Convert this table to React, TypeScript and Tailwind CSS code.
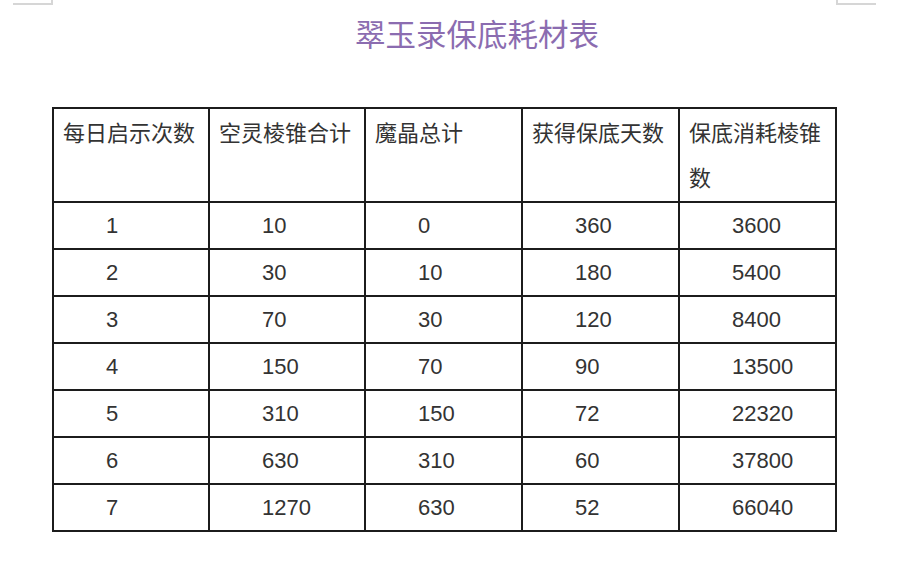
const headers = ["每日启示次数", "空灵棱锥合计", "魔晶总计", "获得保底天数", "保底消耗棱锥数"];

const rows = [
	["1", "10", "0", "360", "3600"],
	["2", "30", "10", "180", "5400"],
	["3", "70", "30", "120", "8400"],
	["4", "150", "70", "90", "13500"],
	["5", "310", "150", "72", "22320"],
	["6", "630", "310", "60", "37800"],
	["7", "1270", "630", "52", "66040"],
];

export default function App() {
	return (
		<div
			className="relative h-[578px] w-[898px] overflow-hidden bg-white"
			style={{ fontFamily: '"Liberation Sans", "Noto Sans CJK SC", sans-serif' }}
		>
			{/* page corner marks */}
			<div className="absolute left-[13px] top-0 h-[5px] w-[40px] border-b-2 border-r-2 border-[#d6d6d6]" />
			<div className="absolute left-[836px] top-0 h-[5px] w-[40px] border-b-2 border-l-2 border-[#d6d6d6]" />

			<h1 className="pl-[355px] pt-[15px] text-[30.5px] leading-[40px] font-normal text-[#8b6cb0]">
				翠玉录保底耗材表
			</h1>

			<table className="ml-[52px] mt-[52px] w-[785px] table-fixed border-separate border-spacing-0 border-l-2 border-t-2 border-[#1c1c1c] text-[#333]">
				<colgroup>
					<col className="w-[156px]" />
					<col className="w-[156px]" />
					<col className="w-[157px]" />
					<col className="w-[157px]" />
					<col className="w-[157px]" />
				</colgroup>
				<thead>
					<tr className="h-[93px]">
						{headers.map((h) => (
							<th
								key={h}
								className="border-b-2 border-r-2 border-[#1c1c1c] pl-[9px] pr-[4px] pt-[2px] text-left align-top text-[22px] leading-[45px] font-normal"
							>
								{h}
							</th>
						))}
					</tr>
				</thead>
				<tbody>
					{rows.map((r) => (
						<tr key={r[0]} className="h-[47px]">
							{r.map((v, i) => (
								<td
									key={i}
									className="border-b-2 border-r-2 border-[#1c1c1c] pl-[52px] align-middle text-[22px] leading-none"
								>
									{v}
								</td>
							))}
						</tr>
					))}
				</tbody>
			</table>
		</div>
	);
}
